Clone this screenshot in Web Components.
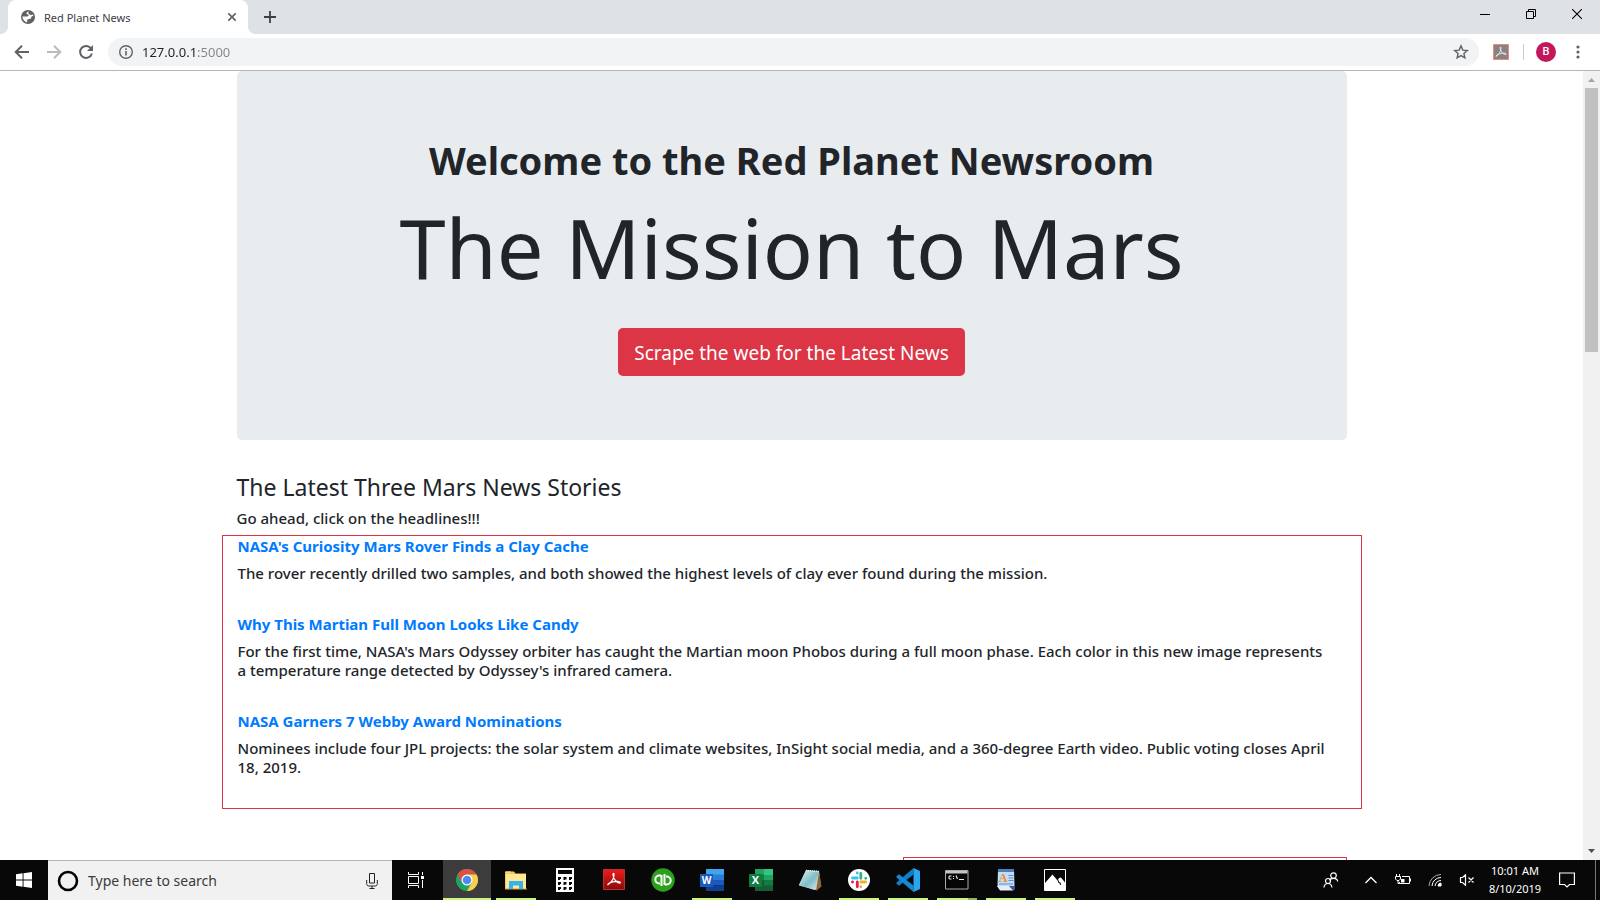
<!DOCTYPE html>
<html lang="en">
<head>
<meta charset="utf-8">
<title>Red Planet News</title>
<style>
  body { margin: 0; font-family: "Noto Sans", "Open Sans", sans-serif; color: #212529; background: #fff; }
</style>
</head>
<body>
<desktop-screen>
  <browser-window slot="window" page-title="Red Planet News" address="127.0.0.1:5000">
    <news-page>
      <mars-jumbotron>
        <span slot="welcome">Welcome to the Red Planet Newsroom</span>
        <span slot="mission">The Mission to Mars</span>
        <span slot="action">Scrape the web for the Latest News</span>
      </mars-jumbotron>
      <story-list>
        <span slot="title">The Latest Three Mars News Stories</span>
        <span slot="hint">Go ahead, click on the headlines!!!</span>
        <news-story href="#clay"><span slot="headline">NASA's Curiosity Mars Rover Finds a Clay Cache</span>The rover recently drilled two samples, and both showed the highest levels of clay ever found during the mission.</news-story>
        <news-story href="#moon"><span slot="headline">Why This Martian Full Moon Looks Like Candy</span>For the first time, NASA's Mars Odyssey orbiter has caught the Martian moon Phobos during a full moon phase. Each color in this new image represents a temperature range detected by Odyssey's infrared camera.</news-story>
        <news-story href="#webby"><span slot="headline">NASA Garners 7 Webby Award Nominations</span>Nominees include four JPL projects: the solar system and climate websites, InSight social media, and a 360-degree Earth video. Public voting closes April 18, 2019.</news-story>
      </story-list>
      <facts-panel></facts-panel>
    </news-page>
  </browser-window>
  <task-bar slot="taskbar"></task-bar>
</desktop-screen>

<script>
const define = (name, html, setup) => {
  const template = document.createElement('template');
  template.innerHTML = html;
  customElements.define(name, class extends HTMLElement {
    constructor() {
      super();
      this.attachShadow({ mode: 'open' }).append(template.content.cloneNode(true));
    }
    connectedCallback() { if (setup) setup(this, this.shadowRoot); }
  });
};

define('desktop-screen', `
  <style>
    :host { display: flex; flex-direction: column; height: 100vh; overflow: hidden; }
    .window { flex: 1; min-height: 0; display: flex; }
  </style>
  <div class="window"><slot name="window"></slot></div>
  <slot name="taskbar"></slot>`);

/* ---------- browser ---------- */

define('browser-tab', `
  <style>
    :host { display: flex; align-items: center; box-sizing: border-box; width: 240px; height: 34px;
      padding: 0 8px 0 12px; background: #fff; border-radius: 8px 8px 0 0; position: relative;
      font-size: 11px; color: #3c4043; }
    :host::before, :host::after { content: ""; position: absolute; bottom: 0; width: 8px; height: 8px; }
    :host::before { right: 100%; background: radial-gradient(circle at 0 0, transparent 8px, #fff 8px); }
    :host::after { left: 100%; background: radial-gradient(circle at 100% 0, transparent 8px, #fff 8px); }
    .name { flex: 1; margin-left: 8px; }
    button { border: 0; background: none; padding: 0; width: 16px; height: 16px; }
    svg { display: block; }
  </style>
  <svg width="16" height="16" viewBox="0 0 16 16"><circle cx="8" cy="8" r="7" fill="#5f6368"/><path d="M8.600 2.200C7.500 2.700 6.500 3.300 6.400 4.600 6.500 5.700 8 5.200 8.600 6.100 8.900 7.300 7.300 7.500 5.800 7.600L2.400 7.600C2.500 10.600 4.800 13 7.300 13.400 7.500 12.200 6.600 11.500 7.400 10.600 8.300 9.900 10.500 10.100 11.200 8.900 11.400 8.200 11.300 7.600 12 7.300L13.400 7.100C13.200 6.500 13 6 12.700 5.500 11.500 6.300 9.900 6 9 5.300 8.300 4.500 8.400 3.300 8.600 2.200Z" fill="#fff"/></svg>
  <span class="name"><slot></slot></span>
  <button aria-label="Close tab"><svg width="16" height="16" viewBox="0 0 16 16"><path d="M4.300 4.300l7.400 7.400M11.700 4.300l-7.400 7.400" stroke="#5f6368" stroke-width="1.700"/></svg></button>`);

define('browser-window', `
  <style>
    :host { display: flex; flex-direction: column; flex: 1; min-width: 0; background: #fff; }
    button { border: 0; background: none; padding: 0; display: grid; place-items: center; color: #5f6368; }
    svg { display: block; fill: none; stroke: currentColor; }
    .strip { display: flex; height: 34px; padding-left: 8px; background: #dee1e6; }
    .strip .new { width: 28px; margin-left: 8px; color: #3c4043; }
    .caption { margin-left: auto; display: flex; height: 28px; }
    .caption button { width: 46px; color: #000; }
    .bar { display: flex; align-items: center; height: 36px; border-bottom: 1px solid #b6b4b6; padding: 0 12px 0 6px; }
    .nav { width: 32px; height: 32px; }
    .omnibox { flex: 1; display: flex; align-items: center; height: 28px; margin-left: 6px; padding: 0 8px; border-radius: 14px; background: #f1f3f4; color: #5f6368; }
    .omnibox input { flex: 1; min-width: 0; border: 0; outline: 0; height: 28px; margin-left: 6px; padding: 0;
      font: 13px "Noto Sans", sans-serif;
      background: linear-gradient(90deg, #202124 54px, #80868b 54px); background-clip: text; -webkit-text-fill-color: transparent; }
    .tool { width: 20px; height: 20px; }
    .ext { width: 44px; height: 24px; }
    .sep { width: 1px; height: 16px; background: #c9cbce; }
    .avatar { width: 20px; height: 20px; margin: 0 12px; border-radius: 50%; background: #c2185b; color: #fff; font: 500 11px/20px Roboto, sans-serif; }
    .view { flex: 1; min-height: 0; display: flex; }
    .page { flex: 1; min-width: 0; overflow: hidden; }
  </style>
  <div class="strip">
    <browser-tab></browser-tab>
    <button class="new" aria-label="New tab"><svg width="14" height="14" viewBox="0 0 14 14"><path d="M7 1v12M1 7h12" stroke-width="1.800"/></svg></button>
    <div class="caption">
      <button aria-label="Minimize"><svg width="10" height="10" viewBox="0 0 10 10"><path d="M0 5.500h10"/></svg></button>
      <button aria-label="Restore"><svg width="10" height="10" viewBox="0 0 10 10"><path d="M.5 2.500h7v7h-7zM2.500 2.500v-2h7v7h-2"/></svg></button>
      <button aria-label="Close"><svg width="10" height="10" viewBox="0 0 10 10"><path d="M0 0l10 10M10 0L0 10" stroke-width="1.100"/></svg></button>
    </div>
  </div>
  <div class="bar">
    <button class="nav" aria-label="Back"><svg width="16" height="16" viewBox="0 0 16 16" stroke-width="2"><path d="M15 8H2.500M8 1.700L1.700 8 8 14.300"/></svg></button>
    <button class="nav" aria-label="Forward" disabled><svg style="color:#b9bbbe" width="16" height="16" viewBox="0 0 16 16" stroke-width="2"><path d="M1 8h12.500M8 1.700L14.300 8 8 14.300"/></svg></button>
    <button class="nav" aria-label="Reload"><svg width="16" height="16" viewBox="0 0 16 16" stroke-width="2"><path d="M13.200 4.700A6 6 0 1 0 13.900 9.500"/><path d="M15 1v6H9z" fill="currentColor" stroke="none"/></svg></button>
    <div class="omnibox">
      <button class="tool" aria-label="Site information"><svg width="16" height="16" viewBox="0 0 16 16"><circle cx="8" cy="8" r="6.300" stroke-width="1.400"/><path d="M8 7v4.500M8 4.300v1.600" stroke-width="1.600"/></svg></button>
      <input aria-label="Address">
      <button class="tool" aria-label="Bookmark this page"><svg width="16" height="16" viewBox="0 0 16 16"><path d="M8 1.900l1.800 4.200 4.500.4-3.400 3 1 4.400L8 11.600l-3.900 2.300 1-4.400-3.400-3 4.500-.4z" stroke-width="1.400"/></svg></button>
    </div>
    <button class="ext" aria-label="Acrobat"><svg width="16" height="16" viewBox="0 0 16 16"><path d="M.5.5h15v15H.5z" fill="#888283" stroke="#ec8a7b"/><path d="M3 12.500C5.500 11 8.300 7 8 3.700 7.800 2.300 6.800 3 7.200 4.600 7.800 7.500 10.500 10.800 13 10.500 14 10 12.500 9 10.500 9.100 8 9.300 4.500 10.200 3.100 11.800Z" stroke="#eee" stroke-width=".9"/></svg></button>
    <span class="sep"></span>
    <button class="avatar" aria-label="Profile">B</button>
    <button class="tool" aria-label="Menu"><svg width="16" height="16" viewBox="0 0 16 16"><g fill="currentColor" stroke="none"><circle cx="8" cy="3" r="1.600"/><circle cx="8" cy="8" r="1.600"/><circle cx="8" cy="13" r="1.600"/></g></svg></button>
  </div>
  <div class="view">
    <div class="page"><slot></slot></div>
    <scroll-rail></scroll-rail>
  </div>`, (host, root) => {
    root.querySelector('browser-tab').textContent = host.getAttribute('page-title');
    root.querySelector('input').value = host.getAttribute('address');
  });

define('scroll-rail', `
  <style>
    :host { display: flex; flex-direction: column; width: 17px; background: #f1f1f1; }
    svg { display: block; flex: none; }
    .track { flex: 1; padding: 0 2px; }
    .thumb { height: 35%; background: #c1c1c1; }
  </style>
  <svg width="17" height="17"><path d="M5 11h7L8.500 7z" fill="#a3a3a3"/></svg>
  <div class="track"><div class="thumb"></div></div>
  <svg width="17" height="17"><path d="M5 6h7L8.500 10z" fill="#505050"/></svg>`);

/* ---------- page ---------- */

define('news-page', `
  <style>:host { display: block; box-sizing: border-box; max-width: 1140px; margin: 0 auto; padding: 0 15px; }</style>
  <slot></slot>`);

define('mars-jumbotron', `
  <style>
    :host { display: block; margin-bottom: 32px; padding: 64px 32px; background: #e9ecef; border-radius: 5px; text-align: center; }
    h1 { margin: 0 0 8px; font-size: 38px; font-weight: 700; line-height: 50px; }
    h2 { margin: 0 0 28px; font-size: 83px; font-weight: 400; line-height: 107px; }
    button { padding: 9px 16px 7px; border: 0; border-radius: 5px; background: #dc3545; color: #fff; font: 19px/32px "Noto Sans", sans-serif; vertical-align: top; }
  </style>
  <h1><slot name="welcome"></slot></h1>
  <h2><slot name="mission"></slot></h2>
  <button><slot name="action"></slot></button>`);

define('story-list', `
  <style>
    :host { display: block; margin-bottom: 48px; }
    h3 { margin: 0 0 7px; font-size: 23px; font-weight: 400; line-height: 30px; }
    p { margin: 0 0 7px; font-size: 15px; font-weight: 500; line-height: 19px; }
    section { margin: 0 -15px; padding: 0 15px; border: 1px solid #dc3545; }
  </style>
  <h3><slot name="title"></slot></h3>
  <p><slot name="hint"></slot></p>
  <section><slot></slot></section>`);

define('news-story', `
  <style>
    :host { display: block; padding: 1px 0 31px; font-size: 15px; line-height: 19px; }
    h4 { margin: 0 0 8px; font-size: 15px; font-weight: 700; }
    a { color: #007bff; text-decoration: none; }
    p { margin: 0; padding-right: 16px; font-weight: 500; }
  </style>
  <h4><a><slot name="headline"></slot></a></h4>
  <p><slot></slot></p>`, (host, root) => { root.querySelector('a').href = host.getAttribute('href'); });

define('facts-panel', `
  <style>:host { display: block; box-sizing: border-box; width: 40%; height: 200px; margin-left: auto; border: 1px solid #dc3545; }</style>
  <slot></slot>`);

/* ---------- taskbar ---------- */

define('task-app', `
  <style>
    :host { display: block; width: 48px; height: 40px; }
    button { display: grid; place-items: center; position: relative; width: 100%; height: 100%; padding: 0; border: 0; background: none; }
    :host([active]) button { background: #3c3c3c; }
    :host([running]) button::after { content: ""; position: absolute; left: 4px; right: 4px; bottom: 0; height: 2px; background: #c9f77b; }
    :host([active]) button::after { left: 0; right: 0; }
    :host([stacked]) button::after { background: linear-gradient(90deg, #c9f77b 31px, #94b566 31px); }
  </style>
  <button><slot></slot></button>`, (host, root) => {
    root.querySelector('button').setAttribute('aria-label', host.getAttribute('label'));
  });

define('tray-clock', `
  <style>:host { display: block; width: 64px; text-align: center; font-size: 11px; line-height: 18px; color: #fff; }</style>
  <time datetime="2019-08-10T10:01">10:01 AM<br>8/10/2019</time>`);

define('task-bar', `
  <style>
    :host { display: flex; align-items: center; height: 40px; background: #080808; color: #fff; }
    button { display: grid; place-items: center; flex: none; width: 48px; height: 40px; padding: 0; border: 0; background: none; color: #fff; }
    svg { display: block; }
    .search { flex: 0 0 344px; display: flex; align-items: center; box-sizing: border-box; height: 40px; padding: 0 8px; background: #f1f1f1; border-top: 1px solid #b4b4b4; }
    .search input { flex: 1; min-width: 0; height: 38px; margin-left: 8px; padding: 0; border: 0; outline: 0; background: none; font: 14px "Noto Sans", sans-serif; color: #3b3b3b; }
    .search input::placeholder { color: #3b3b3b; }
    .search button { width: 24px; height: 38px; }
    .apps { display: flex; gap: 1px; margin-left: 3px; }
    .tray { display: flex; align-items: center; margin-left: auto; }
    .tray .small { width: 32px; }
    .tray .note { width: 40px; }
    .peek { width: 4px; height: 40px; margin-left: 8px; border-left: 1px solid #777; }
  </style>
  <button aria-label="Start"><svg width="16" height="16" viewBox="0 0 16 16" fill="#fff"><path d="M0 2.200L6.600 1.300V7.500H0zM7.500 1.200L16 0v7.500H7.500zM0 8.500h6.600v6.300L0 13.800zM7.500 8.500H16V16l-8.500-1.200z"/></svg></button>
  <label class="search">
    <svg width="24" height="24" viewBox="0 0 24 24"><circle cx="12" cy="12" r="9" fill="none" stroke="#000" stroke-width="2.600"/></svg>
    <input type="text" placeholder="Type here to search" aria-label="Search">
    <button aria-label="Voice search"><svg width="12" height="18" viewBox="0 0 12 18" fill="none" stroke="#222"><path d="M3.500 1.500h5v9.500h-5zM.7 8v3.500c0 2 1 2.500 2.500 2.500h5.600c1.500 0 2.500-.5 2.500-2.500V8M6 14v2.500M3.500 16.500h5"/></svg></button>
  </label>
  <button aria-label="Task view"><svg width="18" height="16" viewBox="0 0 18 16" fill="none" stroke="#fff"><path d="M1.500 4.500h10v7h-10zM1.500 0v2.500h10V0M1.500 16v-2.500h10V16M15.500 0v3M15.500 8v8"/><path d="M14 4h3v3h-3z" fill="#fff" stroke="none"/></svg></button>
  <div class="apps">
    <task-app label="Chrome" active running><svg width="24" height="24" viewBox="0 0 24 24"><circle cx="12" cy="12" r="11" fill="#1da462"/><path d="M12 1a11 11 0 0 1 9.530 5.500H12L7.240 14.750 2.470 6.500A11 11 0 0 1 12 1z" fill="#dd5144"/><path d="M21.530 6.500A11 11 0 0 1 12 23l4.760-8.250L12 6.500z" fill="#ffcd46"/><circle cx="12" cy="12" r="5.500" fill="#fff"/><circle cx="12" cy="12" r="4.300" fill="#4c8bf5"/></svg></task-app>
    <task-app label="File Explorer" running><svg width="24" height="24" viewBox="0 0 24 24"><path d="M1 3.500h9l1.500 2H22V21H1z" fill="#f5c84c"/><path d="M2 6h20v15H2z" fill="#ffe796"/><path d="M1 20.500h22v1H1z" fill="#d9a535"/><path d="M2 4h5" stroke="#fff3c0"/><path d="M5 21v-8h14v8h-4v-3.500H9V21z" fill="#35b3ee"/></svg></task-app>
    <task-app label="Calculator"><svg width="18" height="24" viewBox="0 0 18 24"><path d="M0 0h18v24H0z" fill="#fff"/><path d="M2 2h14v4H2zM2 9h3v3H2zM7.500 9h3v3h-3zM13 9h3v3h-3zM2 14h3v3H2zM7.500 14h3v3h-3zM13 14h3v3h-3zM2 19h3v3H2zM7.500 19h3v3h-3zM13 19h3v3h-3z" fill="#080808"/><path d="M4 11h1v1H4zM9.500 11h1v1h-1zM15 11h1v1h-1zM4 16h1v1H4zM9.500 16h1v1h-1zM15 16h1v1h-1zM4 21h1v1H4zM9.500 21h1v1h-1zM15 21h1v1h-1z" fill="#fff"/></svg></task-app>
    <task-app label="Acrobat Reader"><svg width="22" height="22" viewBox="0 0 22 22"><defs><linearGradient id="pdf" x2="0" y2="1"><stop stop-color="#ee1c1c"/><stop offset="1" stop-color="#880b0b"/></linearGradient></defs><path d="M.5.5h21v20H.5z" fill="url(#pdf)" stroke="#b83030"/><path d="M4.500 16C8 13.500 11.300 9 11 5.200 10.800 3.800 9.700 4.200 10 6 10.500 9.300 13.500 14.400 16.800 14.200 18.300 13.500 16.500 12.300 14 12.300 11 12.300 6 13.500 4.600 15.600" fill="none" stroke="#fff" stroke-width="1.200"/></svg></task-app>
    <task-app label="QuickBooks"><svg width="24" height="24" viewBox="0 0 24 24"><circle cx="12" cy="12" r="11.700" fill="#2ca01c"/><g fill="none" stroke="#fff" stroke-width="2"><path d="M10 7.500H8.300a4 4 0 0 0 0 8H9M10.500 7v11M14 16.500h1.700a4 4 0 0 0 0-8H15M13.500 6v11"/></g></svg></task-app>
    <task-app label="Word" running><svg width="24" height="22" viewBox="0 0 24 22"><path d="M6 0h18v6H6z" fill="#41a5ee"/><path d="M6 5.500h18V11H6z" fill="#2b7cd3"/><path d="M6 11h18v5.500H6z" fill="#185abd"/><path d="M6 16.500h18V22H6z" fill="#103f91"/><path d="M0 5h13v13H0z" fill="#185abd"/><text x="6.500" y="15" text-anchor="middle" font-family="Open Sans, sans-serif" font-weight="700" font-size="10" fill="#fff">W</text></svg></task-app>
    <task-app label="Excel"><svg width="24" height="22" viewBox="0 0 24 22"><path d="M6 0h18v22H6z" fill="#21a366"/><path d="M15 0h9v6h-9z" fill="#33c481"/><path d="M6 5.500h9V11H6z" fill="#107c41"/><path d="M6 11h18v11H6z" fill="#185c37"/><path d="M15 11h9v5.500h-9z" fill="#107c41"/><path d="M0 5h13v13H0z" fill="#107c41"/><text x="6.500" y="15" text-anchor="middle" font-family="Open Sans, sans-serif" font-weight="700" font-size="11" fill="#fff">X</text></svg></task-app>
    <task-app label="Notepad"><svg width="24" height="24" viewBox="0 0 24 24"><defs><linearGradient id="pad" x2="1" y2="1"><stop stop-color="#e4f6f6"/><stop offset=".55" stop-color="#7fbcc6"/><stop offset="1" stop-color="#d4eff2"/></linearGradient></defs><path d="M8 2l13 1 2 15-5 4L1 17.500z" fill="#d9d2bd"/><path d="M21 3.500l2.500 15L18 23z" fill="#8a6a3c"/><path d="M8 2.500l13 .8L16.500 22 .8 17z" fill="url(#pad)"/><path d="M8 2.500l13 1" stroke="#eee" stroke-width="1.500" stroke-dasharray="1 1"/></svg></task-app>
    <task-app label="Slack" running><svg width="24" height="24" viewBox="0 0 24 24"><circle cx="12" cy="12" r="11" fill="#fff"/><g stroke-width="2.800" stroke-linecap="round"><path d="M10.300 5v.1M5.500 10h4.800" stroke="#36c5f0"/><path d="M13.800 5.500v4.800M18.800 10.300h-.1" stroke="#2eb67d"/><path d="M13.800 14h4.800M13.800 18.800v-.1" stroke="#ecb22e"/><path d="M10.300 14v4.800M5.500 14h.1" stroke="#e01e5a"/></g></svg></task-app>
    <task-app label="Visual Studio Code" running><svg width="24" height="24" viewBox="0 0 24 24"><path d="M17.500 0v6.500L3 17.800.3 15.600V14.800z" fill="#0f7fcb"/><path d="M.3 8.400L3 6.200l14.500 11.300V24L.3 9.200z" fill="#1789d2"/><path d="M17.500 0L24 3v18l-6.500 3z" fill="#2aa6f0"/></svg></task-app>
    <task-app label="Command Prompt" running stacked><svg width="24" height="20" viewBox="0 0 24 20"><path d="M.5.5h22.500v18.500H.5z" fill="#050505" stroke="#aaa"/><path d="M1 1h21.500v2.500H1z" fill="#c5c5c5"/><path d="M6.500 6H4.700L4 6.700v1.600l.7.700h1.800M8.500 6v1M8.500 8v1M11 5.500L12.500 9M14 9.500h5" fill="none" stroke="#eee" stroke-width="1.100"/></svg></task-app>
    <task-app label="WordPad" running><svg width="20" height="24" viewBox="0 0 20 24"><path d="M2 1h16l.5 18H1.500z" fill="#c3dcf5"/><path d="M2 1h16v3H2z" fill="#4d7fbd"/><path d="M1 18h13l4.500 3-1.500 1.500H4z" fill="#e8eef5"/><path d="M13 18h6v3l-2 1.500z" fill="#3b5d94"/><path d="M12.500 7.500h5M12.500 10h5M12.500 12.500h5M3 16h14" stroke="#5f8fca"/><text x="7" y="14" text-anchor="middle" font-family="Liberation Serif, serif" font-weight="700" font-size="12" fill="#f08a24">A</text></svg></task-app>
    <task-app label="Photos" running><svg width="22" height="22" viewBox="0 0 22 22"><path d="M.5.5h21v21H.5z" fill="#080808" stroke="#fff"/><path d="M1 14l7.500-8.500 5 6 1.500-2.500 2-.5L21 13.500V21H1z" fill="#fff"/><path d="M13.700 10.500l1.300 3.500 1-.5.500 2.500" stroke="#080808" fill="none"/></svg></task-app>
  </div>
  <div class="tray">
    <button aria-label="People"><svg width="16" height="16" viewBox="0 0 16 16" fill="none" stroke="#fff" stroke-width="1.200"><circle cx="10.500" cy="3.600" r="2.800"/><path d="M6.500 8.300C7 7 8.500 6.400 10.500 6.400 13 6.400 14.500 7.500 14.700 9.500"/><circle cx="5" cy="9" r="2.500"/><path d="M1 15.500C1.200 12.800 2.800 11.500 5 11.500S8.600 12.800 9 15.500"/></svg></button>
    <button class="small" aria-label="Show hidden icons"><svg width="14" height="8" viewBox="0 0 14 8"><path d="M1.500 7L7 1.500 12.500 7" fill="none" stroke="#fff" stroke-width="1.300"/></svg></button>
    <button class="small" aria-label="Battery"><svg width="16" height="12" viewBox="0 0 16 12" fill="none" stroke="#fff"><path d="M7 2.500h7.500v7H4.500V8M15.500 4.500v3M1.500 0v2.500M4.500 0v2.500M.5 2.500h5V5L4 6.500H2L.5 5zM3 6.500v3h1.500"/><path d="M6 5h3.500v3.500H6z" fill="#fff" stroke="none"/></svg></button>
    <button class="small" aria-label="Network"><svg width="14" height="14" viewBox="0 0 14 14" fill="none" stroke="#fff"><path d="M1 13A12 12 0 0 1 13 1.500" stroke="#aaa"/><path d="M4 13A9 9 0 0 1 13 4.500M7 13a6 6 0 0 1 6-5.500"/><path d="M10 13a3 3 0 0 1 3-3V13z" fill="#fff"/></svg></button>
    <button class="small" aria-label="Volume muted"><svg width="16" height="12" viewBox="0 0 16 12" fill="none" stroke="#fff"><path d="M1.500 3.500h2L6.500.8v10.400l-3-2.700h-2zM9.500 3.500l5 5M14.500 3.500l-5 5" stroke-width="1.200"/></svg></button>
    <tray-clock></tray-clock>
    <button class="note" aria-label="Notifications"><svg width="16" height="16" viewBox="0 0 16 16"><path d="M.6 1h14.800v11.500H10.500L8 15l-2.500-2.500H.6z" fill="none" stroke="#fff" stroke-width="1.200"/></svg></button>
    <div class="peek"></div>
  </div>`);
</script>
</body>
</html>
